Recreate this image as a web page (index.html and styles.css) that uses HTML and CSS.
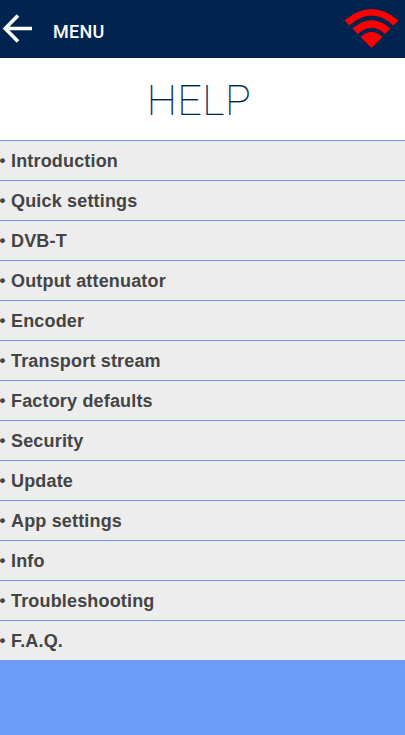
FILE: index.html
```html
<!DOCTYPE html>
<html lang="en">
<head>
    <meta charset="UTF-8">
    <meta name="viewport" content="width=device-width, initial-scale=1.0">
    <title>Help</title>
    <link rel="stylesheet" href="styles.css">
</head>
<body>
    <header class="topbar">
        <a href="#" class="back-btn">
            <svg class="arrow" width="34" height="34" viewBox="0 0 34 34">
                <path d="M18 2.500 L5.200 15.500 L18 28.500 M5.200 15.500 H32" fill="none" stroke="#fff" stroke-width="3.6"/>
            </svg>
            <span>MENU</span>
        </a>
        <svg class="wifi" width="56" height="40" viewBox="0 0 56 40">
            <path d="M0.500 12.500 Q27.500 -10.500 54.500 12.500 L49.500 17.500 Q27.500 -2.500 5.500 17.500 Z" fill="#f00"/>
            <path d="M8.500 20.500 Q27.500 4 46.500 20.500 L41 26 Q27.500 13.500 14 26 Z" fill="#f00"/>
            <path d="M16.500 29 Q27.500 19 38.500 29 L27.500 40 Z" fill="#f00"/>
        </svg>
    </header>

    <h1 class="title">HELP</h1>

    <ul class="help-list">
        <li><a href="#">Introduction</a></li>
        <li><a href="#">Quick settings</a></li>
        <li><a href="#">DVB-T</a></li>
        <li><a href="#">Output attenuator</a></li>
        <li><a href="#">Encoder</a></li>
        <li><a href="#">Transport stream</a></li>
        <li><a href="#">Factory defaults</a></li>
        <li><a href="#">Security</a></li>
        <li><a href="#">Update</a></li>
        <li><a href="#">App settings</a></li>
        <li><a href="#">Info</a></li>
        <li><a href="#">Troubleshooting</a></li>
        <li><a href="#">F.A.Q.</a></li>
    </ul>
</body>
</html>
```

FILE: styles.css
```css
* {
    margin: 0;
    padding: 0;
    box-sizing: border-box;
}

body {
    font-family: "Liberation Sans", Arial, sans-serif;
    background-color: #6c9bf9;
}

a {
    color: inherit;
    text-decoration: none;
}

.topbar {
    display: flex;
    justify-content: space-between;
    height: 58px;
    background: #00234f;
    color: white;
}

.back-btn {
    display: flex;
    align-items: center;
    padding-top: 5px;
    font-family: Roboto, sans-serif;
    font-size: 18px;
    font-weight: 500;
    letter-spacing: 0.3px;
}

.arrow {
    margin: -3px 19px 0 0;
}

.wifi {
    margin: 8px 5px 0 0;
}

.title {
    height: 82px;
    background: white;
    color: #00234f;
    font-family: Roboto, sans-serif;
    font-size: 43px;
    font-weight: 100;
    line-height: 84px;
    letter-spacing: 0.5px;
    text-align: center;
    padding-right: 7px;
    -webkit-text-stroke: 0.2px #00234f;
}

.help-list {
    list-style: none;
    background: #ededed;
    color: #444;
    font-size: 18px;
    font-weight: bold;
    letter-spacing: 0.17px;
}

.help-list li {
    display: flex;
    height: 40px;
    line-height: 40px;
    border-top: 1px solid #7496f0;
}

.help-list li::before {
    content: "•";
    width: 11px;
    font-size: 17px;
    text-indent: -0.5px;
}
```
